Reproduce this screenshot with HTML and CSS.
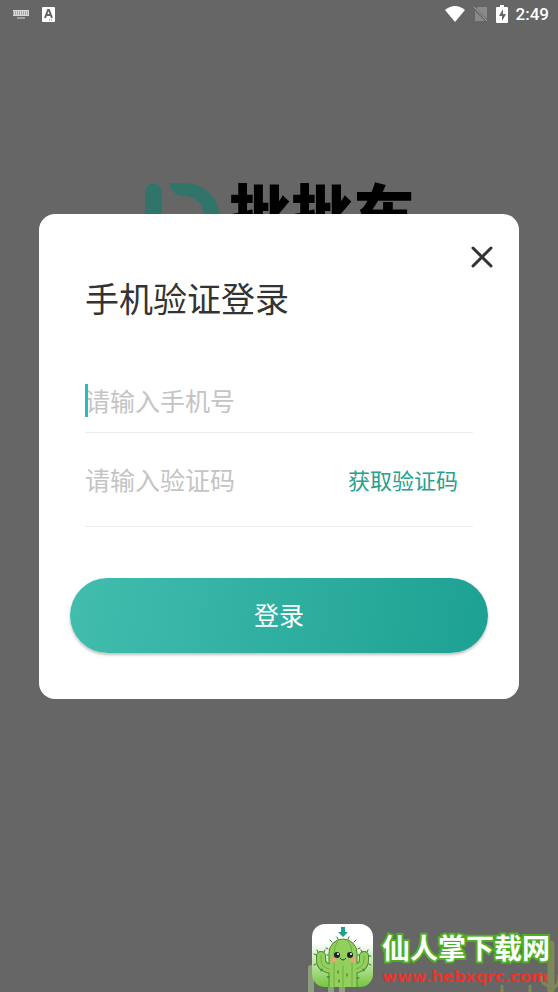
FILE: index.html
```html
<!DOCTYPE html>
<html lang="zh-CN">
<head>
    <meta charset="UTF-8">
    <meta name="viewport" content="width=device-width, initial-scale=1.0">
    <title>手机验证登录</title>
    <link rel="stylesheet" href="styles.css">
</head>
<body>
    <header class="status-bar">
        <div class="status-left">
            <svg width="18" height="10" viewBox="0 0 18 10">
                <path d="M1 1h16v6H1z" fill="#d8d8d8"/>
                <path d="M1 3h16M1 5h16" stroke="#777" stroke-width="1" stroke-dasharray="1 1"/>
                <path d="M5 9h8" stroke="#d8d8d8" stroke-width="1"/>
            </svg>
            <svg width="13" height="15" viewBox="0 0 13 15">
                <rect width="13" height="15" rx="1" fill="#fff"/>
                <path d="M3 11L6 3h1l3 8M4 8h5" fill="none" stroke="#666" stroke-width="2"/>
                <path d="M7 13h4" stroke="#666" stroke-dasharray="1 1"/>
            </svg>
        </div>
        <div class="status-right">
            <svg width="20" height="16" viewBox="0 0 20 16">
                <path d="M0 4Q10-4 20 4L10 16z" fill="#fff"/>
            </svg>
            <svg width="15" height="16" viewBox="0 0 15 16">
                <path d="M5 1h9v14H2V4z" fill="#8a8a8a"/>
                <path d="M0 1l14 14" stroke="#666" stroke-width="3"/>
                <path d="M1 1l13 14" stroke="#a5a5a5" stroke-width="1"/>
            </svg>
            <svg width="12" height="18" viewBox="0 0 12 18">
                <path d="M4 0h4v2h3q1 0 1 1v14q0 1-1 1H1q-1 0-1-1V3q0-1 1-1h3z" fill="#fff"/>
                <path d="M7 4L3 11h3v5l4-7H7z" fill="#666"/>
            </svg>
            <span class="clock">2:49</span>
        </div>
    </header>

    <div class="brand">
        <svg width="78" height="78" viewBox="0 0 78 78">
            <path d="M2 10a8 8 0 0 1 17 0v68H2z" fill="#31756a"/>
            <path d="M26 1h14c21 0 37 14 38 38H62c0-16-9-25-22-25-7 0-12-5-14-13z" fill="#31756a"/>
        </svg>
        <span class="brand-name">批批车</span>
    </div>

    <main class="overlay">
        <form class="dialog">
            <button type="button" class="close" aria-label="关闭">
                <svg width="24" height="24" viewBox="0 0 24 24">
                    <path d="M3 3l18 18M21 3L3 21" stroke="#333" stroke-width="3" stroke-linecap="round"/>
                </svg>
            </button>
            <h1>手机验证登录</h1>
            <div class="field phone">
                <input type="tel" aria-label="手机号" placeholder="请输入手机号">
                <span class="caret"></span>
            </div>
            <div class="field code">
                <input type="text" aria-label="验证码" placeholder="请输入验证码">
                <button type="button" class="get-code">获取验证码</button>
            </div>
            <button type="button" class="login">登录</button>
        </form>
    </main>

    <footer class="site-mark">
        <svg class="desert" width="254" height="60" viewBox="0 0 254 60">
            <g fill="none" stroke="#8c9d80" stroke-linecap="round">
                <path d="M7 60V36" stroke-width="6"/>
                <path d="M27 60V52M38 60V48" stroke-width="6"/>
                <path d="M247 60V12" stroke-width="7" stroke="#7f8657"/>
                <path d="M247 54q-10 0-10-12M247 56q8 0 8-12" stroke-width="3" stroke="#7f8657"/>
                <path d="M226 60V54M198 60V54" stroke-width="3" stroke="#7f8657"/>
            </g>
        </svg>
        <svg class="cactus" width="61" height="63" viewBox="0 0 61 63">
            <defs>
                <linearGradient id="sky" x1="0" y1="0" x2="0" y2="1">
                    <stop offset="0.3" stop-color="#fff"/>
                    <stop offset="1" stop-color="#74c63c"/>
                </linearGradient>
                <clipPath id="tile"><rect width="61" height="63" rx="13"/></clipPath>
            </defs>
            <g clip-path="url(#tile)">
                <rect width="61" height="63" fill="url(#sky)"/>
                <g fill="none" stroke-linecap="round">
                    <path d="M9 32v4q0 8 12 9M52 32v4q0 8-12 9" stroke="#4a8a35" stroke-width="10"/>
                    <path d="M17 66V29a14 14 0 0 1 28 0v37z" fill="#93cf5c" stroke="#4a8a35" stroke-width="1"/>
                    <path d="M9 32v4q0 8 12 9M52 32v4q0 8-12 9" stroke="#93cf5c" stroke-width="8"/>
                    <path d="M18 60V29a13 13 0 0 1 26 0v31" fill="#93cf5c" stroke="none"/>
                    <path d="M26 17q-4 5-4 12v34M36 17q4 5 4 12v34M31 42v21M9 32v4q0 7 8 9M52 32v4q0 7-8 9" stroke="#6bb044" stroke-width="1"/>
                    <path d="M16 25l-2-1M16 31h-1M20 18l-2-2M26 15l-1-2M36 15l1-2M42 18l2-2M46 25l2-1M46 31h1M17 53h-2M45 54h2M4 31l-2-1M6 28l-1-2M12 28l1-2M4 40l-2 1M10 45l-1 2M50 28l-1-2M55 28l1-2M57 32h2M57 40l2 1M51 45l1 2M26 47v2M35 50v2M27 56v2" stroke="#35692c" stroke-width="1"/>
                </g>
                <circle cx="25" cy="31" r="3" fill="#222"/>
                <circle cx="38" cy="31" r="3" fill="#222"/>
                <circle cx="26" cy="30" r="1" fill="#fff"/>
                <circle cx="39" cy="30" r="1" fill="#fff"/>
                <circle cx="22" cy="36" r="2.5" fill="#f5a07c"/>
                <circle cx="41" cy="36" r="2.5" fill="#f5a07c"/>
                <path d="M28 34q3 4 6 0" fill="none" stroke="#333" stroke-width="1"/>
                <path d="M29 3h4v5h3l-5 5-5-5h3z" fill="#20a088"/>
            </g>
        </svg>
        <div class="site-text">
            <strong>仙人掌下载网</strong>
            <span>www.hebxqrc.com</span>
        </div>
    </footer>
</body>
</html>
```
FILE: styles.css
```css
* {
    box-sizing: border-box;
}
body {
    margin: 0;
    min-height: 100vh;
    display: flex;
    flex-direction: column;
    position: relative;
    background-color: #666;
    font-family: "Noto Sans CJK SC", sans-serif;
    color: #333;
}
button, input {
    font-family: inherit;
    border: none;
    background: none;
    padding: 0;
}
svg {
    display: block;
    flex: none;
}

/* status bar */
.status-bar {
    display: flex;
    justify-content: space-between;
    height: 28px;
    padding: 0 9px 0 12px;
}
.status-left, .status-right {
    display: flex;
    align-items: center;
}
.status-left {
    gap: 12px;
}
.status-right {
    gap: 8px;
}
.clock {
    font-family: Roboto, sans-serif;
    font-size: 17px;
    font-weight: 500;
    color: #fff;
}

/* logo behind the dialog */
.brand {
    display: flex;
    justify-content: center;
    align-items: flex-start;
    gap: 8px;
    margin-top: 154px;
}
.brand-name {
    font-size: 62px;
    font-weight: 900;
    line-height: 56px;
    color: #000;
}

/* login dialog */
.overlay {
    position: absolute;
    top: 214px;
    left: 0;
    right: 0;
    padding: 0 39px;
}
.dialog {
    display: flex;
    flex-direction: column;
    padding: 31px 31px 46px;
    border-radius: 16px;
    background-color: #fff;
}
.close {
    align-self: flex-end;
    margin-right: -6px;
    cursor: pointer;
}
h1 {
    margin: 4px 15px 0;
    font-size: 34px;
    font-weight: 400;
    line-height: 50px;
}
.field {
    display: flex;
    align-items: center;
    position: relative;
    margin: 0 15px;
    border-bottom: 1px solid #ececec;
}
.phone {
    height: 65px;
    margin-top: 45px;
}
.code {
    height: 94px;
    padding: 0 15px 2px 0;
}
.field input {
    flex: 1;
    min-width: 0;
    height: 40px;
    font-size: 25px;
    outline: none;
}
.field input::placeholder {
    color: #c4c4c4;
    opacity: 1;
}
.caret {
    position: absolute;
    left: 0;
    width: 3px;
    height: 33px;
    background-color: #26bdbd;
}
.get-code {
    font-size: 22px;
    color: #26a28d;
    cursor: pointer;
}
.login {
    height: 75px;
    margin-top: 51px;
    padding-bottom: 3px;
    border-radius: 38px;
    background: linear-gradient(100deg, #42bdae, #1da192);
    box-shadow: 0 2px 3px rgba(0, 0, 0, 0.25);
    font-size: 25px;
    color: #fff;
    cursor: pointer;
}

/* site mark */
.site-mark {
    display: flex;
    align-items: center;
    align-self: flex-end;
    gap: 9px;
    position: relative;
    margin-top: auto;
    padding: 0 8px 5px 0;
}
.desert {
    position: absolute;
    right: 0;
    bottom: 0;
}
.cactus {
    position: relative;
}
.site-text {
    display: flex;
    flex-direction: column;
    position: relative;
}
.site-text strong {
    font-size: 28px;
    line-height: 42px;
    color: #fff;
    -webkit-text-stroke: 4px #4fae22;
    paint-order: stroke fill;
}
.site-text span {
    font-family: "DejaVu Sans", sans-serif;
    font-size: 16px;
    font-weight: 700;
    line-height: 18px;
    color: #e8342c;
}
```
